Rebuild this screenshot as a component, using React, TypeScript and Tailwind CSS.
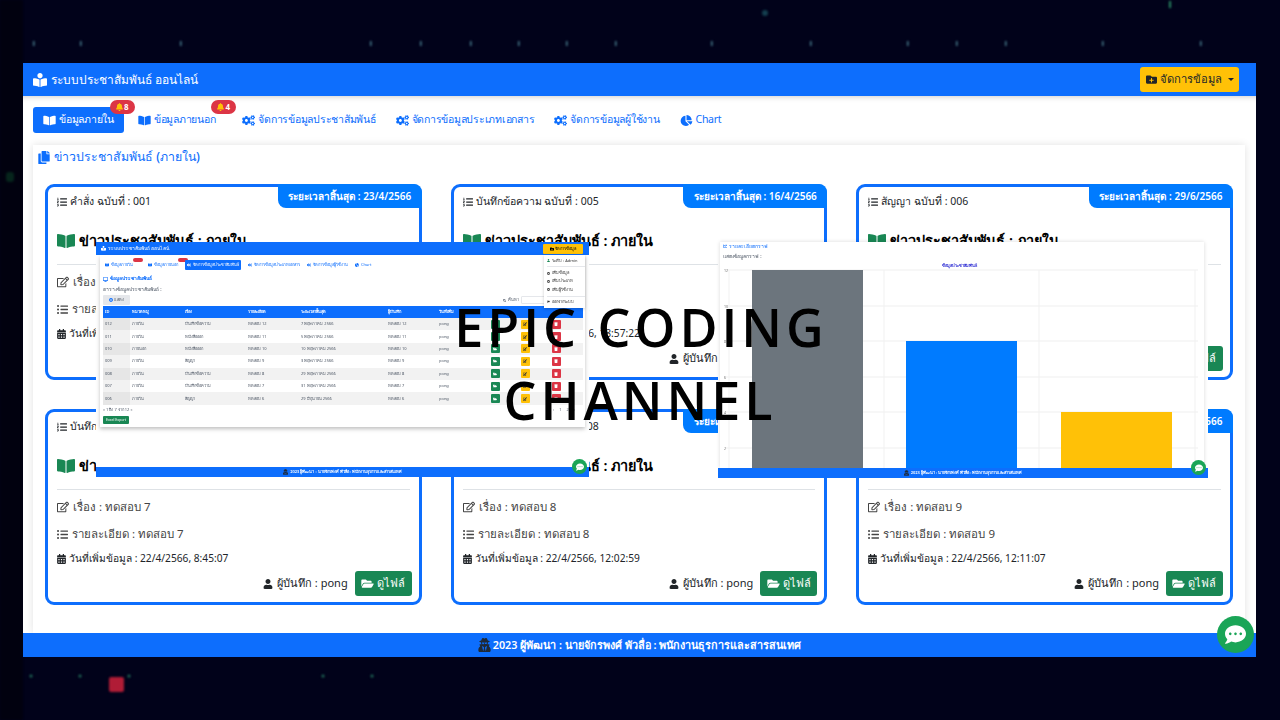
import {
  FaBell,
  FaBookOpen,
  FaBookReader,
  FaCalendarAlt,
  FaChartLine,
  FaChartPie,
  FaCogs,
  FaCommentDots,
  FaCopy,
  FaDesktop,
  FaEdit,
  FaFolderOpen,
  FaFolderPlus,
  FaListOl,
  FaListUl,
  FaPlusCircle,
  FaRegEdit,
  FaSearch,
  FaSignOutAlt,
  FaTrash,
  FaUser,
  FaUserSecret,
} from 'react-icons/fa';

const CARDS = [
  { kind: 'คำสั่ง', no: '001', until: '23/4/2566', n: '1', added: '22/4/2566, 8:12:10' },
  { kind: 'บันทึกข้อความ', no: '005', until: '16/4/2566', n: '5', added: '22/4/2566, 18:57:22' },
  { kind: 'สัญญา', no: '006', until: '29/6/2566', n: '6', added: '22/4/2566, 8:40:31' },
  { kind: 'บันทึกข้อความ', no: '007', until: '30/4/2566', n: '7', added: '22/4/2566, 8:45:07' },
  { kind: 'บันทึกข้อความ', no: '008', until: '21/5/2566', n: '8', added: '22/4/2566, 12:02:59' },
  { kind: 'สัญญา', no: '009', until: '20/5/2566', n: '9', added: '22/4/2566, 12:11:07' },
];

const TABS = [
  { label: 'ข้อมูลภายใน', icon: FaBookOpen, active: true, badge: '8' },
  { label: 'ข้อมูลภายนอก', icon: FaBookOpen, badge: '4' },
  { label: 'จัดการข้อมูลประชาสัมพันธ์', icon: FaCogs },
  { label: 'จัดการข้อมูลประเภทเอกสาร', icon: FaCogs },
  { label: 'จัดการข้อมูลผู้ใช้งาน', icon: FaCogs },
  { label: 'Chart', icon: FaChartPie },
];

const ROWS = [
  ['012', 'ภายใน', 'บันทึกข้อความ', 'ทดสอบ 12', '7 พฤษภาคม 2566', 'ทดสอบ 12'],
  ['011', 'ภายใน', 'หนังสือออก', 'ทดสอบ 11', '5 พฤษภาคม 2566', 'ทดสอบ 11'],
  ['010', 'ภายนอก', 'หนังสือออก', 'ทดสอบ 10', '10 พฤษภาคม 2566', 'ทดสอบ 10'],
  ['009', 'ภายใน', 'สัญญา', 'ทดสอบ 9', '3 พฤษภาคม 2566', 'ทดสอบ 9'],
  ['008', 'ภายใน', 'บันทึกข้อความ', 'ทดสอบ 8', '29 พฤษภาคม 2566', 'ทดสอบ 8'],
  ['007', 'ภายใน', 'บันทึกข้อความ', 'ทดสอบ 7', '31 พฤษภาคม 2566', 'ทดสอบ 7'],
  ['006', 'ภายใน', 'สัญญา', 'ทดสอบ 6', '29 มิถุนายน 2566', 'ทดสอบ 6'],
];

const TABLE_HEAD = ['ID', 'หมวดหมู่', 'เรื่อง', 'รายละเอียด', 'ระยะเวลาสิ้นสุด', 'ผู้บันทึก', 'วันที่เพิ่ม'];

const TOP_DOTS = [33, 80, 180, 370, 420, 470, 518, 566, 615, 711, 810, 907, 956, 1005, 1102, 1200];
const BOTTOM_DOTS = [31, 80, 129, 323, 372];

function Card({ card }: { card: (typeof CARDS)[number] }) {
  return (
    <div className="relative h-[196px] rounded-[9px] border-[3px] border-[#0d6efd] bg-white px-[9px] text-[#212529]">
      <div className="absolute right-[-3px] top-[-3px] flex h-[24px] w-[144px] items-center justify-center rounded-bl-[8px] rounded-tr-[8px] bg-[#007bff] text-[10px] font-semibold text-white">
        ระยะเวลาสิ้นสุด : {card.until}
      </div>
      <div className="flex h-[30px] items-center gap-[3px] text-[10.5px]">
        <FaListOl className="h-[10px] w-[10px]" />
        <span>
          {card.kind} ฉบับที่ : {card.no}
        </span>
      </div>
      <div className="mt-[12px] flex h-[24px] items-center gap-[4px] text-[14.4px] font-semibold text-black">
        <FaBookOpen className="h-[16px] w-[18px] text-[#198754]" />
        ข่าวประชาสัมพันธ์ : ภายใน
      </div>
      <hr className="mt-[11px] border-[#dee2e6]" />
      <div className="mt-[8px] flex h-[18px] items-center gap-[4px] text-[11.5px] text-[#444]">
        <FaRegEdit className="h-[12px] w-[12px]" />
        เรื่อง : ทดสอบ {card.n}
      </div>
      <div className="mt-[9px] flex h-[18px] items-center gap-[4px] text-[11.5px] text-[#444]">
        <FaListUl className="h-[11px] w-[11px]" />
        รายละเอียด : ทดสอบ {card.n}
      </div>
      <div className="mt-[7px] flex h-[18px] items-center gap-[3px] text-[10.2px]">
        <FaCalendarAlt className="h-[10px] w-[9px]" />
        วันที่เพิ่มข้อมูล : {card.added}
      </div>
      <div className="-mr-[2px] mt-[3px] flex items-center justify-end gap-[4px] text-[11px]">
        <FaUser className="h-[10px] w-[10px]" />
        <span className="mr-[3px]">ผู้บันทึก : pong</span>
        <button className="flex h-[25px] w-[57px] items-center justify-center gap-[3px] rounded-[3px] bg-[#198754] text-[11px] font-medium text-white">
          <FaFolderOpen className="h-[11px] w-[13px]" />
          ดูไฟล์
        </button>
      </div>
    </div>
  );
}

function MiniFooter() {
  return (
    <div className="relative flex h-[10px] w-full items-center justify-center gap-[2px] bg-[#0d6efd] text-[4px] font-semibold text-white">
      <FaUserSecret className="h-[6px] w-[5px] text-[#1f2937]" />
      2023 ผู้พัฒนา : นายจักรพงศ์ พัวลื่อ : พนักงานธุรการและสารสนเทศ
      <span className="absolute -top-[8px] right-[2px] flex h-[15px] w-[15px] items-center justify-center rounded-full bg-[#1aa557]">
        <FaCommentDots className="h-[8px] w-[8px] text-white" />
      </span>
    </div>
  );
}

function MiniTable() {
  return (
    <div className="absolute left-[96px] top-[242px] w-[493px] bg-white text-[#4b5563] blur-[0.3px]">
      <div className="flex h-[13px] items-center justify-between bg-[#0d6efd] pl-[5px] pr-[6px] text-[5px] text-white">
        <div className="flex items-center gap-[2px]">
          <FaBookReader className="h-[5px] w-[5px]" />
          ระบบประชาสัมพันธ์ ออนไลน์
        </div>
        <div className="flex h-[10px] w-[40px] items-center justify-center gap-[1px] rounded-[1px] bg-[#ffc107] text-[4px] text-black">
          <FaFolderPlus className="h-[4px] w-[4px]" />
          จัดการข้อมูล
        </div>
      </div>
      <div className="relative ml-[4px] mr-[4px] h-[172px] bg-white pl-[3px] pr-[2px] shadow-[0_2px_4px_rgba(0,0,0,0.25)]">
        <div className="flex h-[19px] items-center gap-[7px] pl-[2px] text-[4px] text-[#0d6efd]">
          {TABS.map((t, i) => (
            <span
              key={t.label}
              className={`relative flex h-[10px] items-center gap-[2px] ${i === 2 ? 'rounded-[1px] bg-[#0d6efd] px-[2px] text-white' : ''} ${i === 0 ? 'mr-[8px]' : ''}`}
            >
              <t.icon className="h-[4px] w-[4px]" />
              {t.label}
              {i < 2 && <span className="absolute -top-[2px] right-[-10px] h-[4px] w-[10px] rounded-full bg-[#dc3545]" />}
            </span>
          ))}
        </div>
        <div className="mt-[1px] flex h-[8px] items-center gap-[2px] text-[5px] font-semibold text-[#0d6efd]">
          <FaDesktop className="h-[5px] w-[5px]" />
          ข้อมูลประชาสัมพันธ์
        </div>
        <div className="mt-[3px] h-[7px] text-[5px] leading-[7px]">ตารางข้อมูลประชาสัมพันธ์ :</div>
        <div className="mt-[1.5px] flex h-[11.5px] items-center justify-between">
          <span className="flex h-[10px] w-[27px] items-center justify-center gap-[1px] rounded-[1px] bg-[#e5e7eb] text-[4px]">
            <FaPlusCircle className="h-[4px] w-[4px] text-[#0d6efd]" />
            แสดง
          </span>
          <span className="flex items-center gap-[2px] pr-[2px] text-[4px]">
            <FaSearch className="h-[3px] w-[3px]" />
            ค้นหา
            <span className="h-[8px] w-[60px] rounded-[1px] border border-[#e5e7eb]" />
          </span>
        </div>
        <div className="grid h-[12px] grid-cols-[27px_53px_63px_53px_87px_51px_43px_30px_30px_32px] items-center bg-[#0d6efd] text-[4px] font-semibold text-white">
          {TABLE_HEAD.map(h => (
            <span key={h} className="pl-[2px]">
              {h}
            </span>
          ))}
        </div>
        {ROWS.map((row, i) => (
          <div
            key={row[0]}
            className={`grid h-[12.4px] grid-cols-[27px_53px_63px_53px_87px_51px_43px_30px_30px_32px] items-center text-[4px] ${i % 2 === 0 ? 'bg-[#f2f2f2]' : 'bg-white'}`}
          >
            <span className={`flex h-full items-center pl-[2px] ${i % 2 === 0 ? 'bg-[#e6e6e6]' : 'bg-[#f2f2f2]'}`}>{row[0]}</span>
            {row.slice(1).map((c, j) => (
              <span key={j} className="pl-[2px]">
                {c}
              </span>
            ))}
            <span className="pl-[2px]">pong</span>
            <span className="flex h-[9px] w-[9px] items-center justify-center justify-self-center rounded-[1px] bg-[#198754]">
              <FaFolderOpen className="h-[4px] w-[4px] text-white" />
            </span>
            <span className="flex h-[9px] w-[9px] items-center justify-center justify-self-center rounded-[1px] bg-[#ffc107]">
              <FaEdit className="h-[4px] w-[4px] text-[#333]" />
            </span>
            <span className="flex h-[9px] w-[9px] items-center justify-center justify-self-center rounded-[1px] bg-[#dc3545]">
              <FaTrash className="h-[4px] w-[4px] text-white" />
            </span>
          </div>
        ))}
        <div className="mt-[1px] flex h-[8px] items-center justify-between pr-[8px] text-[4px]">
          <span>« 1 ถึง 7 จาก 12 »</span>
          <span className="flex gap-[5px]">
            <span>‹</span>
            <span>1</span>
            <span>2</span>
            <span>›</span>
          </span>
        </div>
        <div className="mt-[2px] flex h-[8px] w-[26px] items-center justify-center rounded-[1px] bg-[#198754] text-[3.5px] text-white">
          Excel Export
        </div>
        <div className="absolute right-0 top-0 h-[53px] w-[41px] bg-white pl-[3px] text-[4px] text-[#333] shadow-[0_1px_3px_rgba(0,0,0,0.2)]">
          <div className="flex h-[11px] items-center gap-[2px]">
            <FaUser className="h-[3px] w-[3px] text-[#198754]" />
            ระดับ : Admin
          </div>
          <div className="border-t border-[#e5e7eb] pt-[2px]">
            {['เพิ่มข้อมูล', 'เพิ่มประเภท', 'เพิ่มผู้ใช้งาน'].map(x => (
              <div key={x} className="flex h-[8.3px] items-center gap-[2px]">
                <FaPlusCircle className="h-[3px] w-[3px]" />
                {x}
              </div>
            ))}
          </div>
          <div className="mt-[2px] flex h-[11px] items-center gap-[2px] border-t border-[#e5e7eb]">
            <FaSignOutAlt className="h-[3px] w-[3px]" />
            ออกจากระบบ
          </div>
        </div>
      </div>
      <div className="h-[40px]" />
      <MiniFooter />
    </div>
  );
}

function MiniChart() {
  return (
    <div className="absolute left-[718px] top-[242px] w-[490px] bg-white blur-[0.3px]">
      <div className="relative ml-[2px] h-[226px] w-[484px] bg-white shadow-[0_0_4px_rgba(0,0,0,0.15)]">
        <svg width="484" height="226" viewBox="0 0 484 226">
          <text x="239" y="25" fontSize="4" fontWeight="600" fill="#1e1ed0" textAnchor="middle">
            ข้อมูลประชาสัมพันธ์
          </text>
          {[29, 65, 100, 136, 171, 207].map((y, i) => (
            <g key={y}>
              <line x1="5" x2="478" y1={y - 1} y2={y - 1} stroke="#efefef" />
              <text x="4" y={y + 1} fontSize="3.5" fill="#777">
                {12 - i * 2}
              </text>
            </g>
          ))}
          {[9, 164, 319, 475].map(x => (
            <line key={x} x1={x} x2={x} y1="28" y2="226" stroke="#f1f1f1" />
          ))}
          <rect x="32" y="28" width="111" height="198" fill="#6c757d" />
          <rect x="186" y="99" width="111" height="127" fill="#007bff" />
          <rect x="341" y="170" width="111" height="56" fill="#ffc107" />
        </svg>
        <div className="absolute left-[3px] top-0 text-[5px] leading-[8px]">
          <div className="flex h-[7px] items-center gap-[2px] text-[#0d6efd]">
            <FaChartLine className="h-[4px] w-[4px]" />
            รายละเอียดกราฟ
          </div>
          <div className="mt-[3px] text-[#4b5563]">แสดงข้อมูลกราฟ :</div>
        </div>
      </div>
      <MiniFooter />
    </div>
  );
}

export default function App() {
  return (
    <div
      className="relative h-[720px] w-[1280px] overflow-hidden bg-[#01021a]"
      style={{ fontFamily: '"Noto Sans", "Open Sans", "Liberation Sans", sans-serif' }}
    >
      <svg width="1280" height="720" viewBox="0 0 1280 720" className="absolute inset-0 blur-[1px]">
        <rect x="-4" y="-4" width="27" height="730" fill="#01010f" />
        {TOP_DOTS.map(x => (
          <rect key={x} x={x} y="41" width="1.5" height="5" fill="#4a7f8f" />
        ))}
        <circle cx="765" cy="13" r="3" fill="#143f50" />
        <rect x="1169" y="1" width="2" height="7" fill="#2a8a64" />
        {BOTTOM_DOTS.map(x => (
          <circle key={x} cx={x} cy="676" r="1.5" fill="#22705a" />
        ))}
        <rect x="109" y="677" width="15" height="15" rx="2" fill="#b01c36" />
        <rect x="6" y="172" width="8" height="10" rx="3" fill="#06251c" />
      </svg>

      <div className="relative ml-[23px] mt-[63px] flex h-[594px] w-[1233px] flex-col bg-white">
        <nav className="flex h-[33px] items-center justify-between bg-[#0d6efd] pl-[10px] pr-[17px] text-white">
          <div className="flex items-center gap-[4px] text-[12px]">
            <FaBookReader className="h-[14px] w-[14px]" />
            ระบบประชาสัมพันธ์ ออนไลน์
          </div>
          <button className="flex h-[25px] w-[99px] items-center justify-center gap-[3px] rounded-[3px] bg-[#ffc107] text-[11.2px] text-[#212529]">
            <FaFolderPlus className="h-[11px] w-[11px]" />
            จัดการข้อมูล
            <span className="ml-[3px] border-x-[3px] border-t-[3px] border-x-transparent border-t-[#212529]" />
          </button>
        </nav>

        <div className="flex h-[49px] items-start px-[10px] pt-[11px] shadow-[inset_0_6px_6px_-6px_rgba(0,0,0,0.25)]">
          {TABS.map((tab, i) => (
            <a
              key={tab.label}
              className={`relative flex h-[26px] items-center gap-[3px] rounded-[3px] px-[10px] text-[10.5px] tracking-[-0.25px] ${tab.active ? 'bg-[#0d6efd] text-white' : 'text-[#0d6efd]'} ${i === 0 ? 'mr-[4px]' : ''} ${i === 1 ? 'mr-[7px]' : ''}`}
            >
              <tab.icon className="h-[11px] w-[13px]" />
              {tab.label}
              {tab.badge && (
                <span className="absolute -top-[7px] right-[-11px] flex h-[14px] w-[25px] items-center justify-center gap-[1px] rounded-full bg-[#dc3545] text-[8px] font-bold tracking-normal text-white">
                  <FaBell className="h-[8px] w-[7px] text-[#ffc107]" />
                  {tab.badge}
                </span>
              )}
            </a>
          ))}
        </div>

        <main className="ml-[10px] mr-[11px] flex-1 bg-white px-[12px] shadow-[0_0_8px_rgba(0,0,0,0.12)]">
          <div className="flex h-[39px] items-center gap-[4px] pb-[15px] text-[12.3px] font-medium text-[#0d6efd]">
            <FaCopy className="-ml-[7px] h-[13px] w-[12px]" />
            ข่าวประชาสัมพันธ์ (ภายใน)
          </div>
          <div className="grid grid-cols-3 gap-x-[29px] gap-y-[29px]">
            {CARDS.map(card => (
              <Card key={card.no} card={card} />
            ))}
          </div>
        </main>

        <footer className="flex h-[24px] items-center justify-center gap-[2px] bg-[#0d6efd] text-[10.8px] font-semibold text-white">
          <FaUserSecret className="h-[14px] w-[13px] text-[#1f2937]" />
          2023 ผู้พัฒนา : นายจักรพงศ์ พัวลื่อ : พนักงานธุรการและสารสนเทศ
        </footer>
      </div>

      <MiniTable />
      <MiniChart />

      <div
        className="absolute left-0 top-[290px] w-[1280px] text-center text-[52px] font-semibold leading-[73px] tracking-[4px] text-black"
        style={{ fontFamily: '"Open Sans", sans-serif' }}
      >
        <div className="pl-[2px]">EPIC CODING</div>
        <div>CHANNEL</div>
      </div>

      <button className="absolute left-[1217px] top-[616px] flex h-[37px] w-[37px] items-center justify-center rounded-full bg-[#1aa557] text-white">
        <FaCommentDots className="h-[21px] w-[21px]" />
      </button>
    </div>
  );
}
